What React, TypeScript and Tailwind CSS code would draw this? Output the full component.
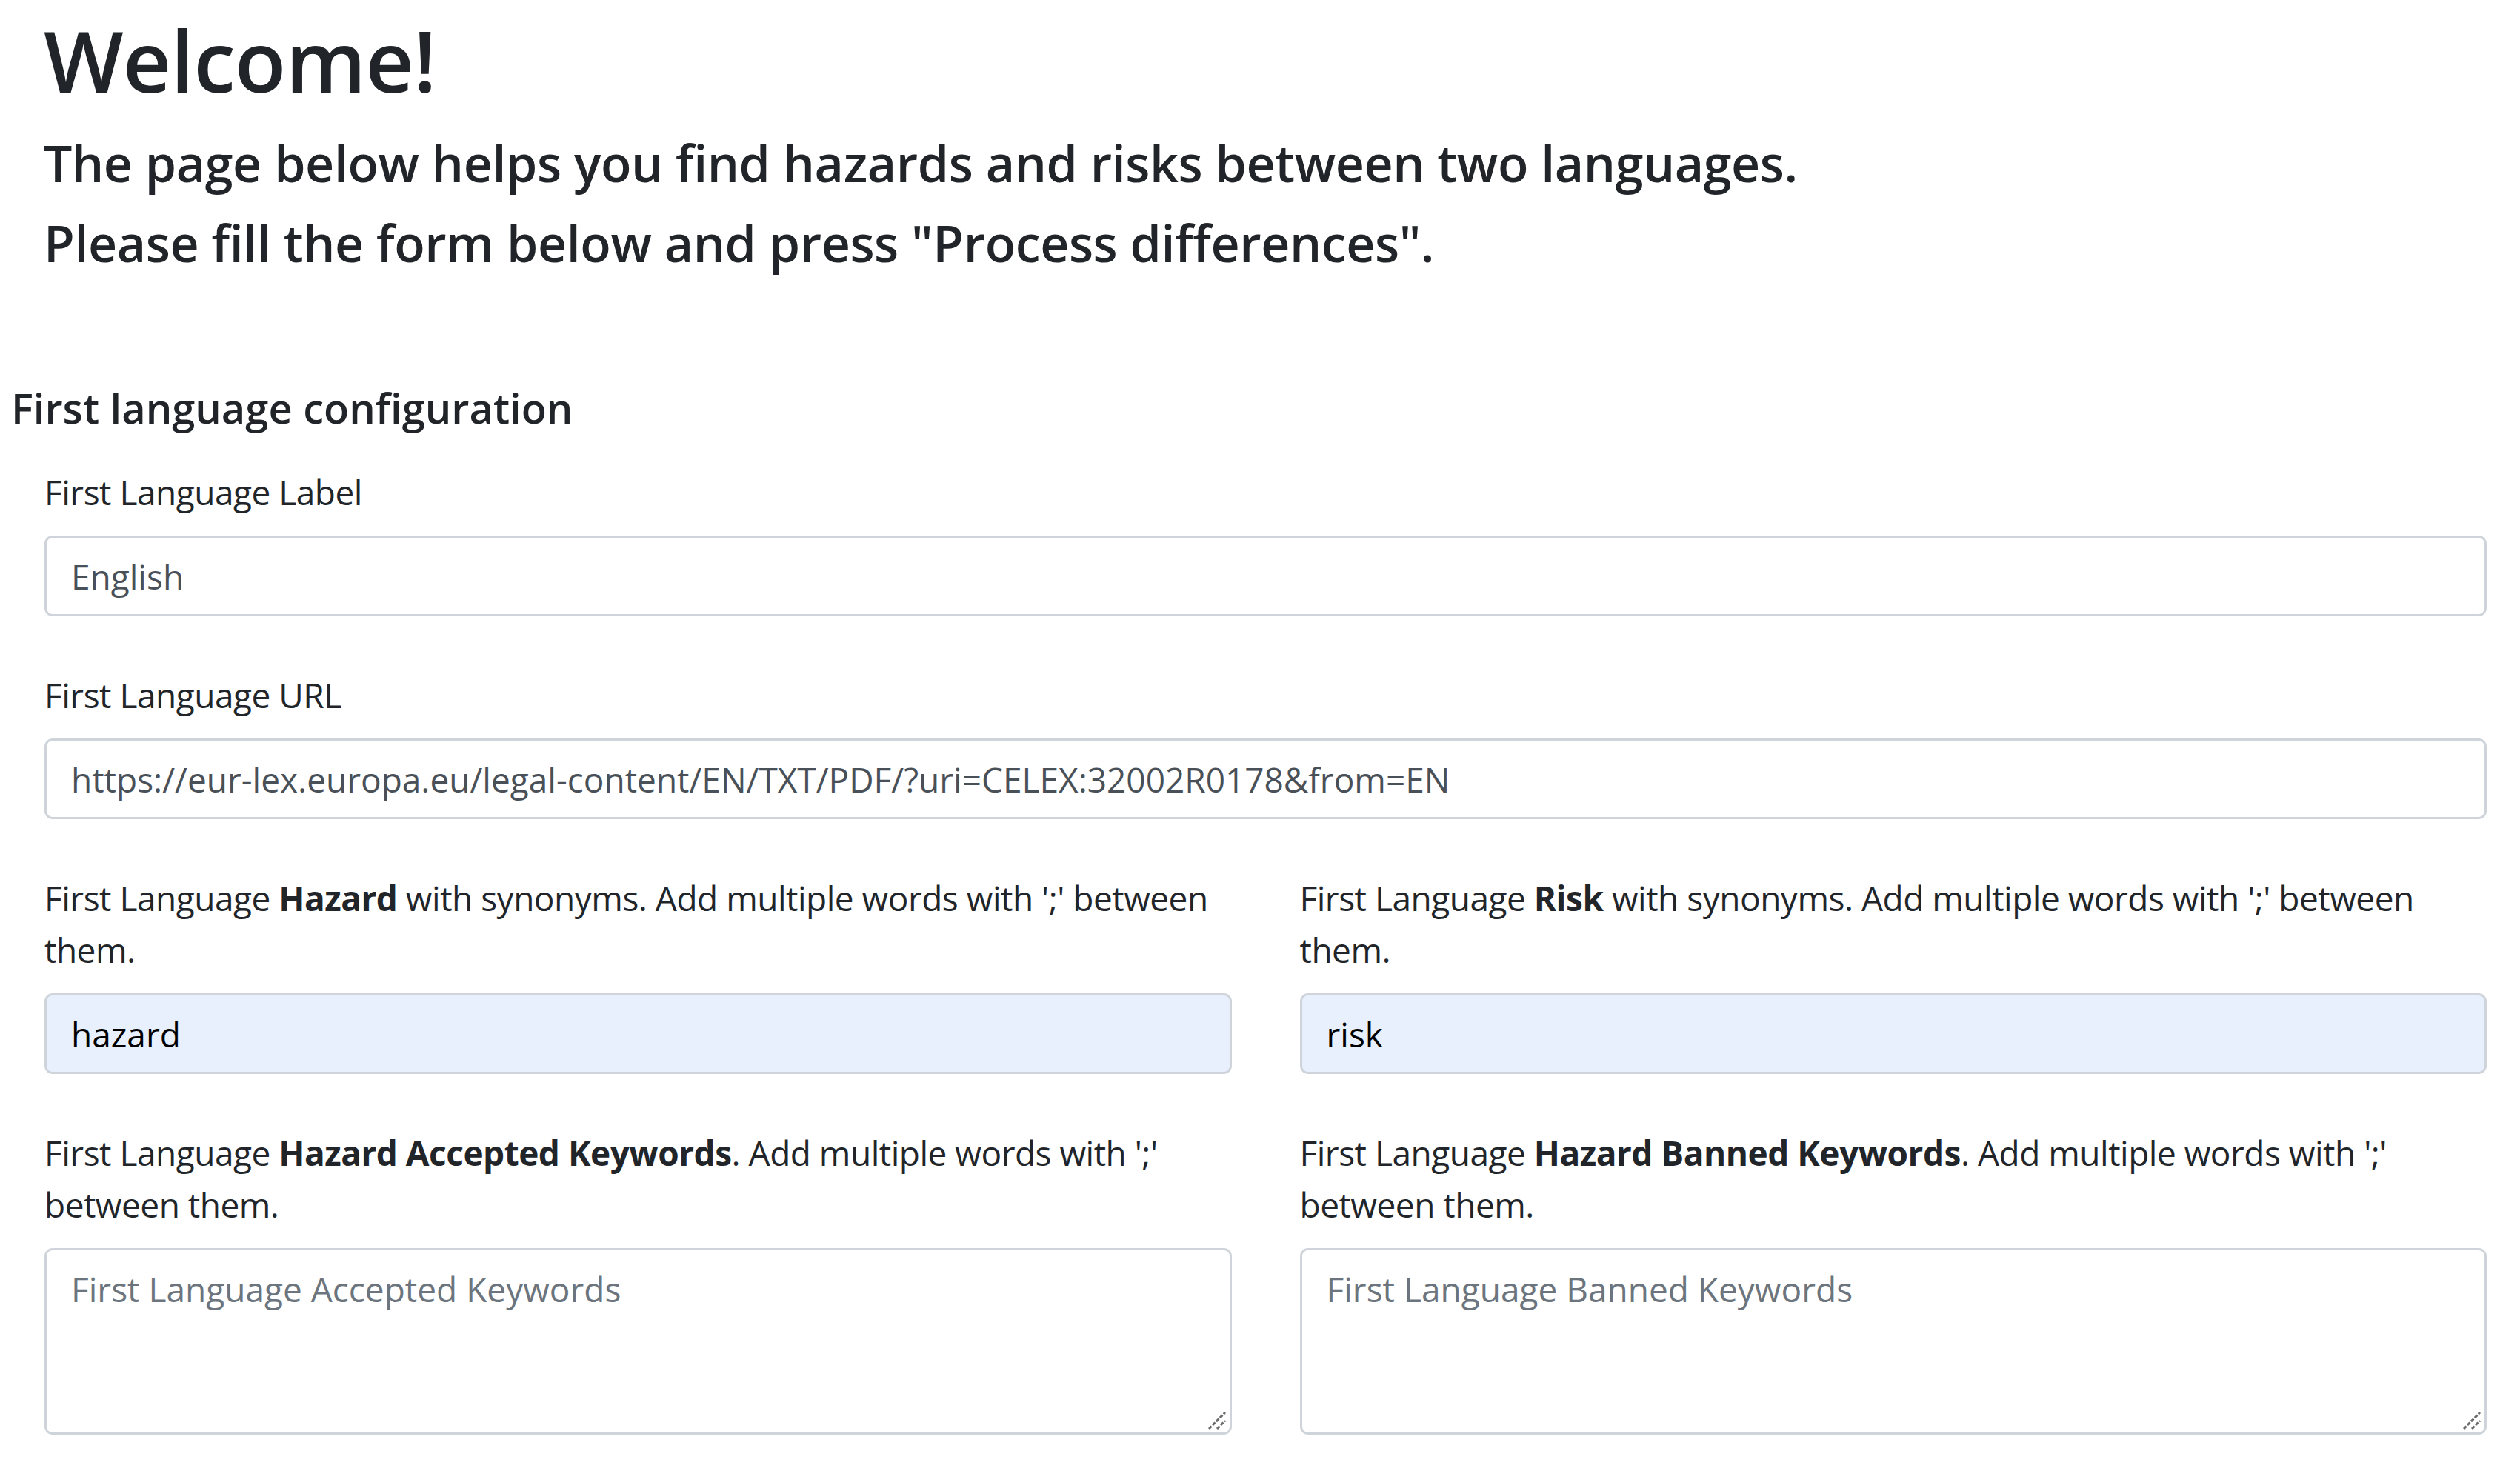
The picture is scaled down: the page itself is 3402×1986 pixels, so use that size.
import type { ReactNode } from "react";

const labelCls = "block text-[46px] leading-[70px] tracking-[-0.5px] mb-[24px]";
const inputCls =
  "block w-full h-[109px] rounded-[11px] border-[3px] border-[#ced4da] px-[33px] text-[46px] leading-[70px] outline-none";

function Field({
  label,
  children,
}: {
  label: ReactNode;
  children: ReactNode;
}) {
  return (
    <div className="flex flex-col">
      <label className={labelCls}>{label}</label>
      {children}
    </div>
  );
}

function Keywords({ placeholder }: { placeholder: string }) {
  return (
    <div className="relative">
      <textarea
        rows={3}
        placeholder={placeholder}
        className="block w-full h-[252px] resize-none rounded-[11px] border-[3px] border-[#ced4da] px-[33px] py-[17px] text-[46px] leading-[70px] text-[#495057] placeholder:text-[#6c757d] outline-none"
      />
      {/* resize grip */}
      <svg
        className="absolute right-[8px] bottom-[7px] w-[24px] h-[24px]"
        viewBox="0 0 24 24"
      >
        <path
          d="M1 23 L23 1 M12 23 L23 12"
          stroke="#6b6b6b"
          strokeWidth="3"
          strokeDasharray="5 2"
        />
      </svg>
    </div>
  );
}

export default function App() {
  return (
    <div className="flex flex-col min-h-[1986px] w-full bg-white text-[#212529] font-['Open_Sans','Liberation_Sans',sans-serif]">
      <div className="flex flex-col pl-[59px] pt-[12px]">
        <h1 className="text-[114px] font-semibold leading-[138px] tracking-[-1px] mb-[28px]">
          Welcome!
        </h1>
        <h4 className="text-[68px] font-semibold leading-[84px] tracking-[-0.4px] mb-[24px]">
          The page below helps you find hazards and risks between two languages.
        </h4>
        <h4 className="text-[68px] font-semibold leading-[84px] tracking-[-0.4px]">
          Please fill the form below and press "Process differences".
        </h4>
      </div>

      <div className="flex flex-col pl-[15px] pr-[45px] mt-[146px]">
        <h5 className="text-[56px] font-semibold leading-[68px] mb-[45px]">
          First language configuration
        </h5>

        <div className="flex flex-col gap-[71px] pl-[45px]">
          <Field label="First Language Label">
            <input defaultValue="English" className={`${inputCls} text-[#495057]`} />
          </Field>

          <Field label="First Language URL">
            <input
              defaultValue="https://eur-lex.europa.eu/legal-content/EN/TXT/PDF/?uri=CELEX:32002R0178&from=EN"
              className={`${inputCls} text-[#495057]`}
            />
          </Field>

          <div className="grid grid-cols-2 gap-x-[92px]">
            <Field
              label={
                <>
                  First Language <b className="font-bold">Hazard</b> with synonyms. Add multiple words with ';' between them.
                </>
              }
            >
              <input defaultValue="hazard" className={`${inputCls} bg-[#e8f0fe] text-black`} />
            </Field>
            <Field
              label={
                <>
                  First Language <b className="font-bold">Risk</b> with synonyms. Add multiple words with ';' between them.
                </>
              }
            >
              <input defaultValue="risk" className={`${inputCls} bg-[#e8f0fe] text-black`} />
            </Field>
          </div>

          <div className="grid grid-cols-2 gap-x-[92px]">
            <Field
              label={
                <>
                  First Language <b className="font-bold">Hazard Accepted Keywords</b>. Add multiple words with ';' between them.
                </>
              }
            >
              <Keywords placeholder="First Language Accepted Keywords" />
            </Field>
            <Field
              label={
                <>
                  First Language <b className="font-bold">Hazard Banned Keywords</b>. Add multiple words with ';' between them.
                </>
              }
            >
              <Keywords placeholder="First Language Banned Keywords" />
            </Field>
          </div>
        </div>
      </div>
    </div>
  );
}
